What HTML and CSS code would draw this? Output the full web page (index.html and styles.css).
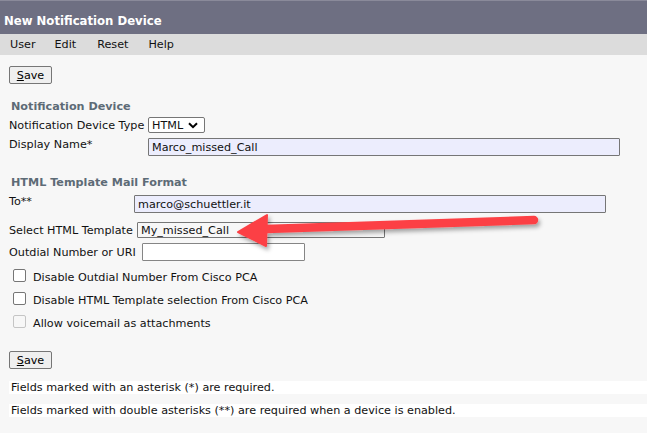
FILE: index.html
```html
<!DOCTYPE html>
<html>
<head>
<meta charset="utf-8">
<link rel="stylesheet" href="styles.css">
</head>
<body>
<div class="page">
  <div class="titlebar">New Notification Device</div>
  <div class="menubar">
    <span class="menu-item">User</span>
    <span class="menu-item">Edit</span>
    <span class="menu-item">Reset</span>
    <span class="menu-item">Help</span>
  </div>
  <div class="content">
    <div class="toolbar"><button class="btn"><u>S</u>ave</button></div>
    <div class="section-title first">Notification Device</div>
    <div class="row row-type">
      <span class="label w-type">Notification Device Type</span>
      <span class="select">HTML <svg class="chev" width="10" height="7" viewBox="0 0 10 7"><path d="M1 1.2 L5 5.2 L9 1.2" fill="none" stroke="#000" stroke-width="2"/></svg></span>
    </div>
    <div class="row row-name">
      <span class="label w-type">Display Name*</span>
      <span class="input filled w-name">Marco_missed_Call</span>
    </div>
    <div class="section-title second">HTML Template Mail Format</div>
    <div class="row row-to">
      <span class="label w-to">To**</span>
      <span class="input filled w-to-input">marco@schuettler.it</span>
    </div>
    <div class="row row-tpl">
      <span class="label w-tpl">Select HTML Template</span>
      <span class="input plain w-tpl-input">My_missed_Call</span>
    </div>
    <div class="row row-out">
      <span class="label w-out">Outdial Number or URI</span>
      <span class="input white w-out-input"></span>
    </div>
    <div class="checks">
      <div class="check-row"><span class="cb"></span><span>Disable Outdial Number From Cisco PCA</span></div>
      <div class="check-row"><span class="cb"></span><span>Disable HTML Template selection From Cisco PCA</span></div>
      <div class="check-row"><span class="cb disabled"></span><span>Allow voicemail as attachments</span></div>
    </div>
    <div class="toolbar bottom"><button class="btn"><u>S</u>ave</button></div>
    <div class="note first-note">Fields marked with an asterisk (*) are required.</div>
    <div class="note">Fields marked with double asterisks (**) are required when a device is enabled.</div>
  </div>
  <svg class="arrow" width="320" height="50" viewBox="0 0 320 50">
    <defs>
      <filter id="sh" x="-10%" y="-50%" width="120%" height="200%">
        <feDropShadow dx="2" dy="3" stdDeviation="2" flood-color="#000" flood-opacity="0.35"/>
      </filter>
    </defs>
    <g filter="url(#sh)">
      <path d="M30 25 L298 16" stroke="#fc4145" stroke-width="8.5" stroke-linecap="round" fill="none"/>
      <path d="M2 28 L31 11 L30 42 Z" fill="#fc4145" stroke="#fc4145" stroke-width="2" stroke-linejoin="round"/>
    </g>
  </svg>
</div>
</body>
</html>
```

FILE: styles.css
```css
* { box-sizing: border-box; }
html, body {
  margin: 0;
  padding: 0;
  background: #f7f7f7;
}
body {
  font-family: "DejaVu Sans", Verdana, sans-serif;
  font-size: 11.2px;
  color: #111;
}
.page {
  position: relative;
  width: 647px;
  height: 433px;
  overflow: hidden;
}
.titlebar {
  height: 34px;
  background: #6e6f82;
  border-top: 1px solid #8a8a9a;
  color: #fff;
  font-weight: bold;
  font-size: 11.7px;
  padding: 13px 0 0 4px;
}
.menubar {
  height: 21px;
  background: #dcdcdc;
  display: flex;
  align-items: center;
  padding-left: 10px;
}
.menu-item { margin-right: 19px; }
.menu-item:nth-child(2) { margin-right: 21px; }
.menu-item:nth-child(3) { margin-right: 20px; }
.content {
  padding-left: 9px;
}
.toolbar {
  margin-top: 11px;
  height: 18px;
}
.toolbar.bottom { margin-top: 23px; }
.btn {
  font-family: inherit;
  font-size: 11.2px;
  height: 18px;
  width: 43px;
  padding: 0;
  background: #efefef;
  border: 1px solid #767676;
  border-radius: 2px;
  color: #000;
}
.section-title {
  font-weight: bold;
  color: #5d6b76;
  font-size: 11.2px;
  margin-left: 2px;
}
.section-title.first { margin-top: 16px; }
.section-title.second { margin-top: 20px; }
.row {
  display: flex;
  align-items: center;
}
.label { flex: none; }
.w-type { width: 139px; }
.w-to { width: 125px; align-self: flex-start; padding-top: 0; }
.w-tpl { width: 128px; }
.w-out { width: 133px; }
.row-type { margin-top: 4px; height: 16px; }
.row-name { margin-top: 5px; align-items: flex-start; }
.row-to { margin-top: 6px; }
.row-tpl { margin-top: 9px; }
.row-out { margin-top: 5px; }
.select {
  display: inline-flex;
  align-items: center;
  height: 16px;
  width: 57px;
  border: 1px solid #767676;
  border-radius: 2px;
  background: #fff;
  padding-left: 3px;
  font-size: 11.2px;
}
.chev { margin-left: 5px; }
.input {
  display: inline-flex;
  align-items: center;
  height: 18px;
  border: 1px solid #767676;
  border-radius: 1px;
  padding-left: 3px;
  font-size: 11.2px;
}
.input.filled { background: #ecedfd; }
.input.plain { background: transparent; height: 16px; }
.input.white { background: #fff; border-color: #858585; }
.w-name { width: 472px; }
.w-to-input { width: 472px; }
.w-tpl-input { width: 248px; }
.w-out-input { width: 163px; }
.checks { margin-top: 8px; }
.check-row {
  display: flex;
  align-items: center;
  height: 13px;
}
.check-row span:last-child { padding-top: 4px; }
.check-row + .check-row { margin-top: 10px; }
.cb {
  width: 13px;
  height: 13px;
  border: 1px solid #767676;
  border-radius: 2px;
  background: #fff;
  margin-left: 4px;
  margin-right: 7px;
  flex: none;
}
.cb.disabled { border-color: #c5c5c5; background: #f7f7f7; }
.note {
  background: #fff;
  height: 13px;
  line-height: 13px;
  padding-left: 2px;
}
.first-note { margin-top: 12px; }
.note + .note { margin-top: 10px; }
.arrow {
  position: absolute;
  left: 236px;
  top: 204px;
}
```
